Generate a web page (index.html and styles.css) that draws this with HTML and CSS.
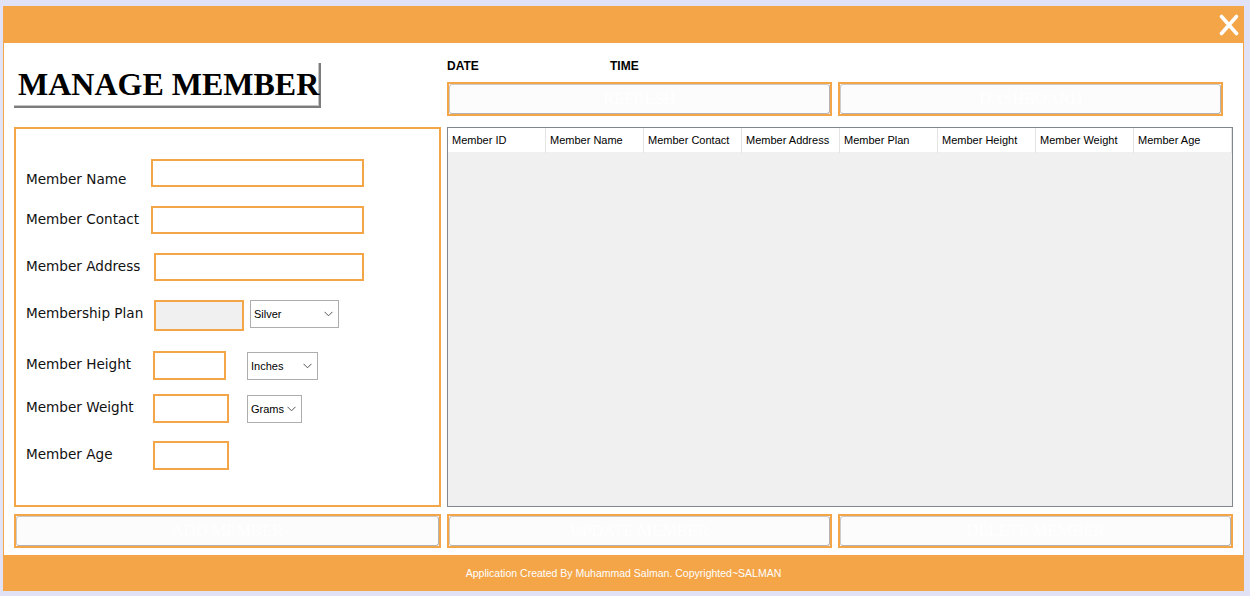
FILE: index.html
```html
<!DOCTYPE html>
<html lang="en">
<head>
    <meta charset="UTF-8">
    <meta name="viewport" content="width=device-width, initial-scale=1.0">
    <title>Manage Member</title>
    <link rel="stylesheet" href="styles.css">
</head>
<body>
    <div class="window">
        <header class="titlebar">
            <svg class="close" width="20" height="22" viewBox="0 0 20 22">
                <path d="M2.5 2.5 L17.5 19.5 M17.5 2.5 L2.5 19.5" stroke="#fff" stroke-width="3.6" stroke-linecap="round" fill="none"/>
            </svg>
        </header>

        <div class="content">
            <div class="top">
                <div class="title-col">
                    <h1 class="title">MANAGE MEMBER</h1>
                </div>
                <div class="info-col">
                    <div class="clock">
                        <span class="date">DATE</span>
                        <span>TIME</span>
                    </div>
                    <div class="btn-row">
                        <button class="btn"><span>REFRESH</span></button>
                        <button class="btn"><span>DASHBOARD</span></button>
                    </div>
                </div>
            </div>

            <div class="main">
                <form class="panel">
                    <div class="row row-name">
                        <label class="low">Member Name</label>
                        <input type="text" class="field wide">
                    </div>
                    <div class="row row-contact">
                        <label>Member Contact</label>
                        <input type="text" class="field wide">
                    </div>
                    <div class="row row-address">
                        <label>Member Address</label>
                        <input type="text" class="field address">
                    </div>
                    <div class="row row-plan">
                        <label>Membership Plan</label>
                        <input type="text" class="field plan" disabled>
                        <div class="combo combo-plan">
                            <span>Silver</span>
                            <svg width="9" height="6" viewBox="0 0 9 6"><path d="M0.5 0.8 L4.5 4.8 L8.5 0.8" stroke="#555" stroke-width="1" fill="none"/></svg>
                        </div>
                    </div>
                    <div class="row row-height">
                        <label>Member Height</label>
                        <input type="text" class="field small">
                        <div class="combo combo-height">
                            <span>Inches</span>
                            <svg width="9" height="6" viewBox="0 0 9 6"><path d="M0.5 0.8 L4.5 4.8 L8.5 0.8" stroke="#555" stroke-width="1" fill="none"/></svg>
                        </div>
                    </div>
                    <div class="row row-weight">
                        <label>Member Weight</label>
                        <input type="text" class="field small2">
                        <div class="combo combo-weight">
                            <span>Grams</span>
                            <svg width="9" height="6" viewBox="0 0 9 6"><path d="M0.5 0.8 L4.5 4.8 L8.5 0.8" stroke="#555" stroke-width="1" fill="none"/></svg>
                        </div>
                    </div>
                    <div class="row row-age">
                        <label>Member Age</label>
                        <input type="text" class="field small2">
                    </div>
                </form>

                <div class="grid">
                    <div class="grid-head">
                        <div class="cell">Member ID</div>
                        <div class="cell">Member Name</div>
                        <div class="cell">Member Contact</div>
                        <div class="cell">Member Address</div>
                        <div class="cell">Member Plan</div>
                        <div class="cell">Member Height</div>
                        <div class="cell">Member Weight</div>
                        <div class="cell">Member Age</div>
                    </div>
                </div>
            </div>

            <div class="actions">
                <button class="btn"><span>ADD MEMBER</span></button>
                <button class="btn"><span>UPDATE MEMBER</span></button>
                <button class="btn"><span>DELETE MEMBER</span></button>
            </div>
        </div>

        <footer class="footer">Application Created By Muhammad Salman. Copyrighted~SALMAN</footer>
    </div>
</body>
</html>
```

FILE: styles.css
```css
body {
    margin: 0;
    background-color: #e2e2f6;
    font-family: "Liberation Sans", Arial, sans-serif;
}
.window {
    box-sizing: border-box;
    width: 1241px;
    height: 585px;
    margin: 6px 0 0 3px;
    background-color: #fff;
    border-left: 1px solid #f4a548;
    border-right: 1px solid #f4a548;
    display: flex;
    flex-direction: column;
}
.titlebar {
    height: 37px;
    background-color: #f4a548;
    display: flex;
    justify-content: flex-end;
    align-items: center;
    padding-right: 4px;
}
.close {
    display: block;
    margin-top: 1px;
}
.content {
    flex: 1;
    padding-left: 10px;
}
.top {
    display: grid;
    grid-template-columns: 433px 786px;
    height: 84px;
}
.title {
    display: inline-block;
    margin: 20px 0 0 0;
    padding: 0 0 0 4px;
    height: 43px;
    line-height: 43px;
    font-family: "Liberation Serif", "Times New Roman", serif;
    font-size: 32px;
    font-weight: bold;
    color: #000;
    border-right: 2px solid #7c7c7c;
    border-bottom: 2px solid #7c7c7c;
    box-shadow: inset -1px -1px 0 #c4c4c4;
}
.clock {
    display: flex;
    margin-top: 16px;
    height: 14px;
    line-height: 14px;
    font-size: 12px;
    font-weight: bold;
    color: #000;
}
.date {
    width: 163px;
}
.btn-row {
    display: grid;
    grid-template-columns: 385px 385px;
    gap: 6px;
    margin-top: 9px;
}
.btn {
    box-sizing: border-box;
    height: 34px;
    padding: 0;
    border: 2px solid #f4a548;
    background-color: #fff;
    cursor: pointer;
}
.btn span {
    box-sizing: border-box;
    display: flex;
    align-items: center;
    justify-content: center;
    height: 100%;
    border: 1px solid #cbcbcb;
    border-right-color: #b4b4b4;
    border-bottom-color: #b4b4b4;
    border-radius: 3px;
    background-color: #fcfcfc;
    font-family: "Liberation Serif", "Times New Roman", serif;
    font-size: 16.5px;
    color: #fff;
}
.main {
    display: grid;
    grid-template-columns: 427px 786px;
    gap: 6px;
    height: 380px;
}
.panel {
    box-sizing: border-box;
    margin: 0;
    border: 2px solid #f4a548;
    padding: 30px 0 0 10px;
}
.row {
    display: flex;
    align-items: center;
    font-family: "DejaVu Sans", Verdana, sans-serif;
    font-size: 13.6px;
    color: #111;
}
.row label {
    width: 125px;
    flex-shrink: 0;
    padding-bottom: 3px;
}
.row label.low {
    align-self: flex-end;
    padding-bottom: 0;
    line-height: 16px;
}
.row-plan label {
    padding-bottom: 5px;
}
.row-contact, .row-address { margin-top: 19px; }
.row-plan { margin-top: 19px; }
.row-height { margin-top: 20px; }
.row-weight { margin-top: 14px; }
.row-age { margin-top: 18px; }
.field {
    box-sizing: border-box;
    height: 28px;
    margin: 0;
    padding: 0 4px;
    border: 2px solid #f4a548;
    background-color: #fff;
    outline: none;
}
.wide { width: 213px; }
.address { width: 210px; margin-left: 3px; }
.plan {
    width: 90px;
    height: 31px;
    margin-left: 3px;
    background-color: #f0f0f0;
}
.small, .small2 {
    height: 29px;
    margin-left: 2px;
}
.small { width: 73px; }
.small2 { width: 76px; }
.combo {
    box-sizing: border-box;
    display: flex;
    align-items: center;
    justify-content: space-between;
    height: 28px;
    padding: 0 5px 0 3px;
    border: 1px solid #adadad;
    background-color: #fff;
    font-family: "Liberation Sans", Arial, sans-serif;
    font-size: 11px;
    color: #000;
}
.combo svg {
    display: block;
}
.combo-plan {
    width: 89px;
    margin-left: 6px;
    align-self: flex-start;
}
.combo-height {
    width: 71px;
    margin-left: 21px;
}
.combo-weight {
    width: 55px;
    margin-left: 18px;
}
.grid {
    box-sizing: border-box;
    border: 1px solid #82868e;
    background-color: #f0f0f0;
}
.grid-head {
    display: grid;
    grid-template-columns: repeat(8, 98px);
    height: 24px;
    background-color: #fff;
}
.cell {
    box-sizing: border-box;
    padding-left: 4px;
    line-height: 25px;
    font-size: 11px;
    color: #000;
    border-right: 1px solid #e3e3e3;
    white-space: nowrap;
}
.actions {
    display: grid;
    grid-template-columns: 427px 385px 395px;
    gap: 6px;
    margin-top: 7px;
}
.footer {
    height: 36px;
    margin-top: 7px;
    background-color: #f4a548;
    color: #fff;
    font-size: 10.5px;
    line-height: 36px;
    text-align: center;
}
```
